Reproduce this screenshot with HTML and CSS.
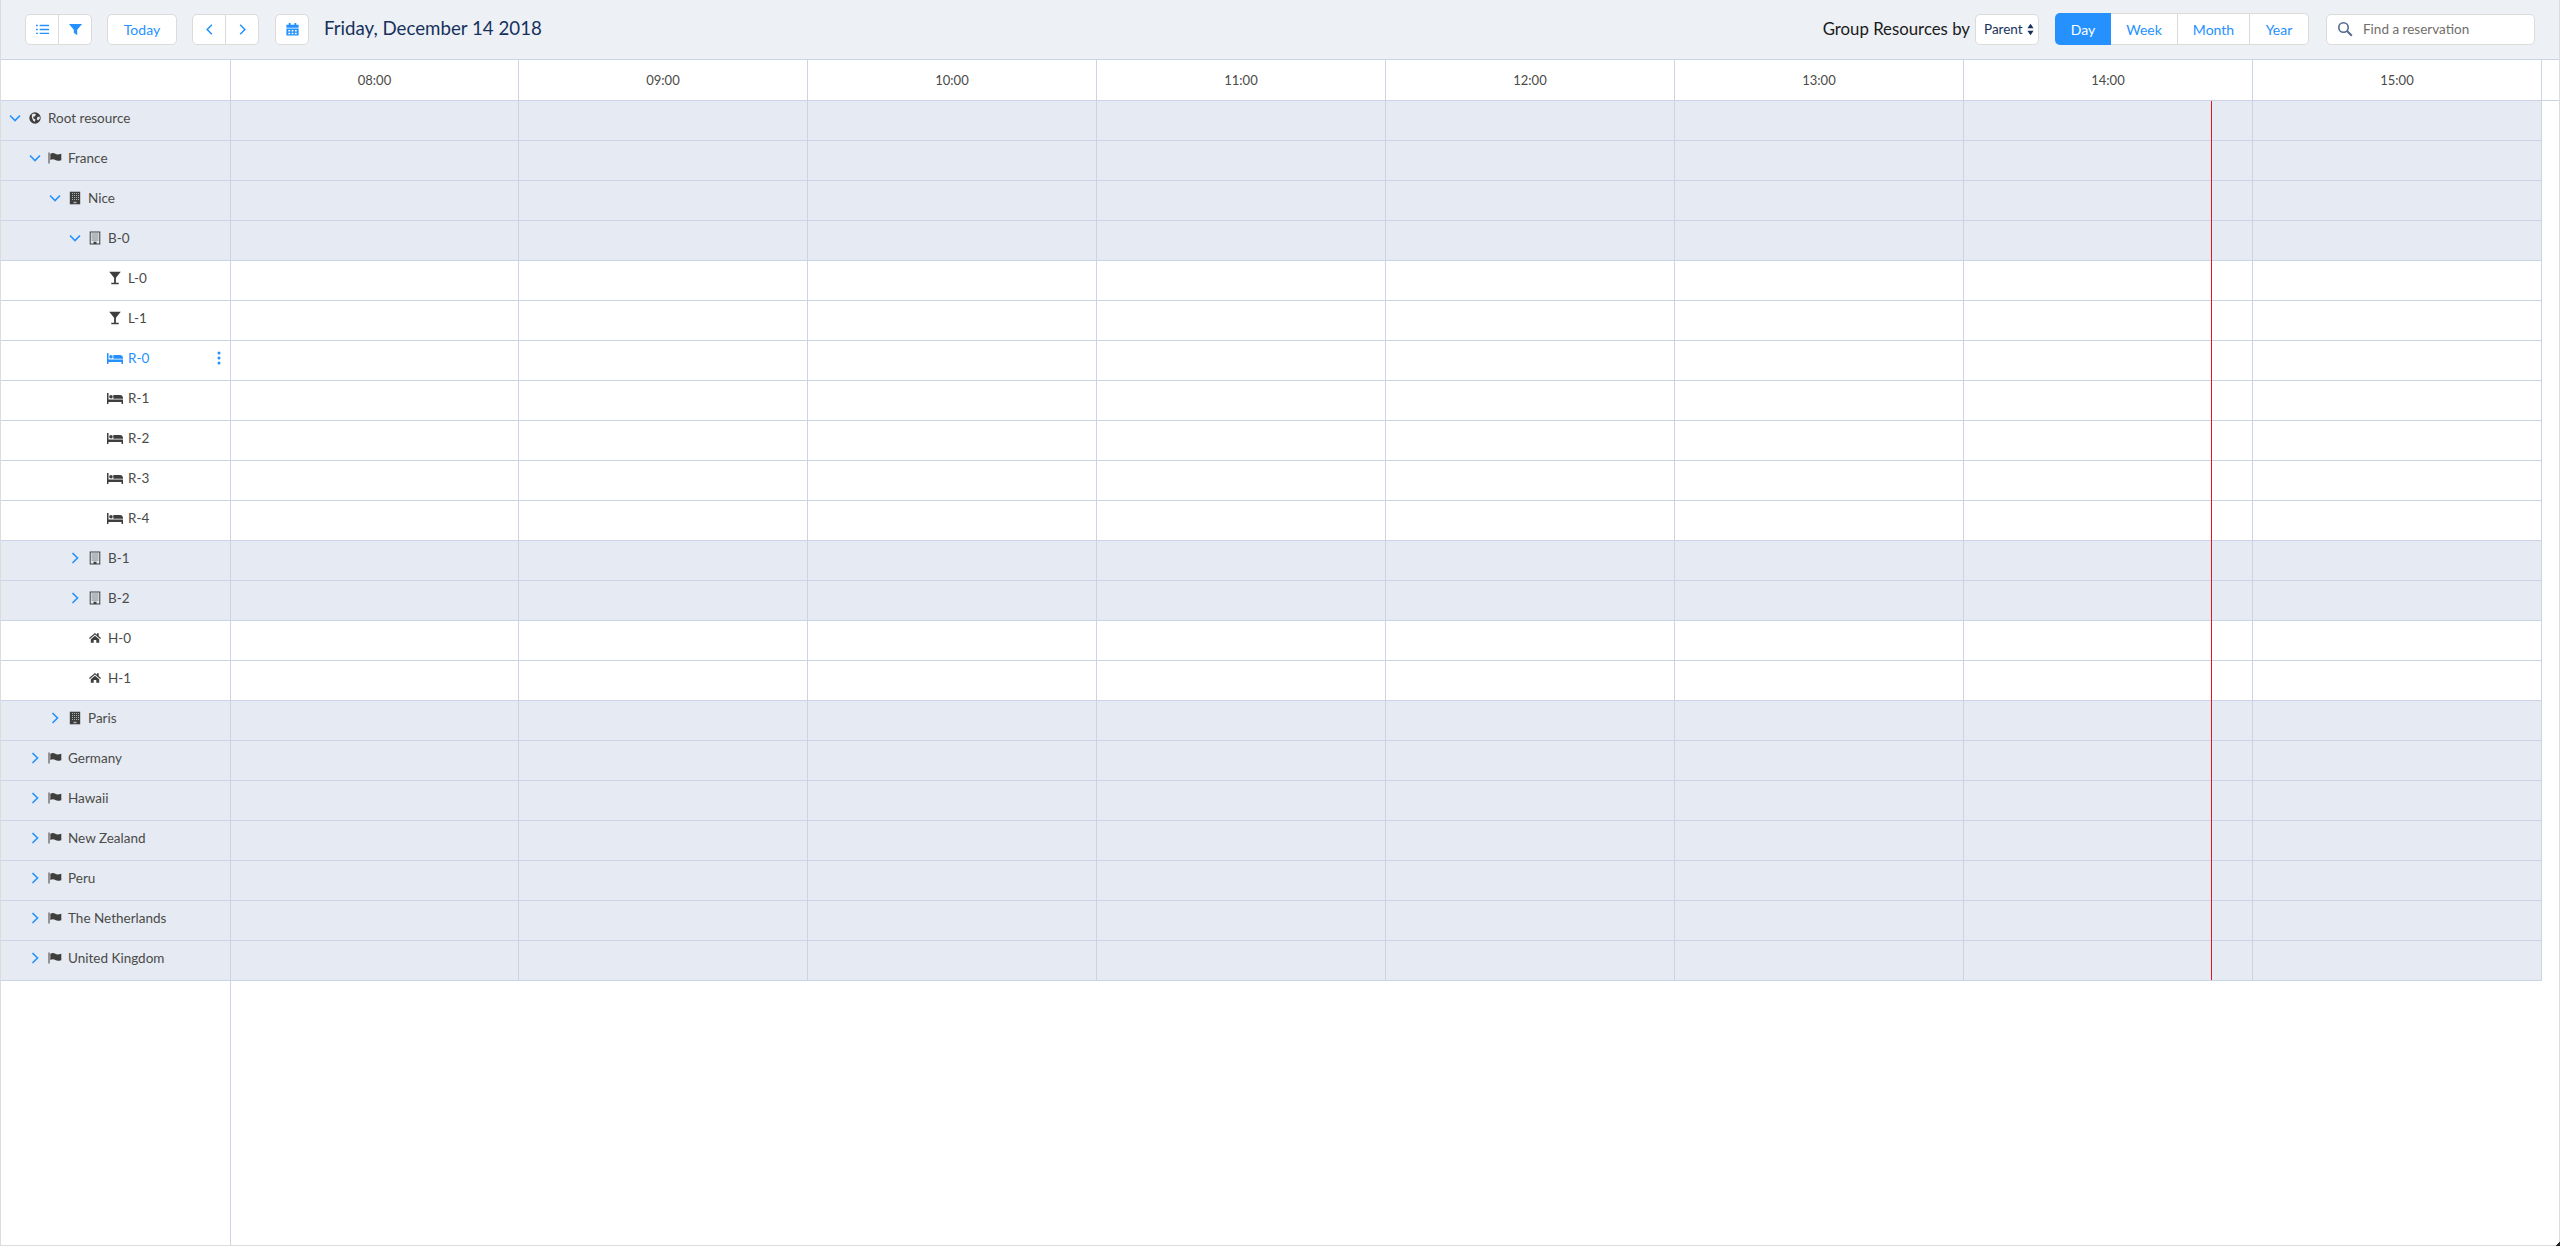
FILE: index.html
```html
<!DOCTYPE html>
<html lang="en">
<head>
<meta charset="utf-8">
<title>Scheduler</title>
<link rel="stylesheet" href="styles.css">
</head>
<body>
<svg class="defs" width="0" height="0" aria-hidden="true">
  <symbol id="i-globe" viewBox="0 0 16 16"><circle cx="8" cy="8" r="5.700" fill="currentColor"/><path d="M4.800 4.600 7 3.400l2 1-1 1.800-1.800.5.400 1.800 1.900 1-.7 2.200-1.600-1L4.900 7.500zM10.400 7l2.200-.4.300 1.800-1.800 2.200-1.300-1.300z" fill="#e6eaf2"/></symbol>
  <symbol id="i-flag" viewBox="0 0 16 16"><path d="M1.500 2.500h1v11h-1z" fill="currentColor"/><path d="M3.300 3.800c2-1.100 3.500-1.100 5 0 1.500.8 3 .8 6 0v6.400c-3 .8-4.500.8-6-.2-1.500-1-3-1-5 0z" fill="currentColor"/></symbol>
  <symbol id="i-city" viewBox="0 0 16 16"><path d="M2.800 1.700h10.400v12.600H2.800z" fill="currentColor"/><path d="M5 3h1v1H5zm2 0h1v1H7zm2 0h1v1H9zm2 0h1v1h-1zM5 5h1v1H5zm2 0h1v1H7zm2 0h1v1H9zm2 0h1v1h-1zM5 7h1v1H5zm2 0h1v1H7zm2 0h1v1H9zm2 0h1v1h-1zM5 9h1v1H5zm2 0h1v1H7zm2 0h1v1H9zm2 0h1v1h-1zM6.500 11.700h3v1.600h-3z" fill="#a8aeb6"/></symbol>
  <symbol id="i-building" viewBox="0 0 16 16"><path d="M2.700 1.500h10.600v13H2.700zm1 1v11h2.800v-1.800h3v1.800h2.800v-11z" fill="currentColor"/><path d="M4.700 3.300h6.600v7.600H4.700z" fill="#9298a0"/><path d="M6 3.300v7.600M8 3.300v7.600M10 3.300v7.600M4.700 5h6.600M4.700 7h6.600M4.700 9h6.600" stroke="#dfe3ea" stroke-width=".5"/></symbol>
  <symbol id="i-glass" viewBox="0 0 16 16"><path d="M2.200 1.800h11.600L8.900 7.800v5h2.800v1.400H4.300v-1.400h2.800v-5z" fill="currentColor"/></symbol>
  <symbol id="i-bed" viewBox="1 1 16 14"><path d="M1 3h1.500v6.500H17V14h-1.500v-2h-13v2H1z" fill="currentColor"/><circle cx="5" cy="6.800" r="1.800" fill="currentColor"/><path d="M7.300 5h6.700c1.600 0 3 1 3 3v.8H7.300z" fill="currentColor"/></symbol>
  <symbol id="i-home" viewBox="0 0 16 16"><path d="M8 3 2 8.100l.8.900L8 4.600 13.200 9l.8-.9-2.300-2V3.300H10v1.400z" fill="currentColor"/><path d="M3.800 9.300 8 5.700l4.200 3.600v3.500H9.300V10H6.700v2.800H3.800z" fill="currentColor"/></symbol>
  <symbol id="i-down" viewBox="0 0 16 16"><path d="M3 5.500 8 10.500 13 5.500" fill="none" stroke="currentColor" stroke-width="1.600"/></symbol>
  <symbol id="i-right" viewBox="0 0 16 16"><path d="M5.500 3 10.500 8 5.500 13" fill="none" stroke="currentColor" stroke-width="1.600"/></symbol>
  <symbol id="i-left" viewBox="0 0 16 16"><path d="M10.500 3 5.500 8 10.500 13" fill="none" stroke="currentColor" stroke-width="1.600"/></symbol>
</svg>

<div class="frame">
  <header class="toolbar">
    <div class="btn-group">
      <button class="btn icon-btn" aria-label="List">
        <svg class="ico-btn" viewBox="0 0 16 16"><path d="M1 3h2v1.500H1zm4 0h10v1.500H5zM1 7.200h2v1.500H1zm4 0h10v1.500H5zM1 11.400h2v1.500H1zm4 0h10v1.500H5z" fill="currentColor"/></svg>
      </button>
      <button class="btn icon-btn" aria-label="Filter">
        <svg class="ico-btn" viewBox="0 0 16 16"><path d="M1 2h14L9.800 8.200V14L6.200 11.500V8.200z" fill="currentColor"/></svg>
      </button>
    </div>
    <button class="btn today">Today</button>
    <div class="btn-group">
      <button class="btn icon-btn" aria-label="Previous"><svg class="ico-btn"><use href="#i-left"/></svg></button>
      <button class="btn icon-btn" aria-label="Next"><svg class="ico-btn"><use href="#i-right"/></svg></button>
    </div>
    <button class="btn icon-btn single" aria-label="Pick date">
      <svg class="ico-btn" viewBox="0 0 16 16"><path d="M4 1h2v2h4V1h2v2h2.500v3h-13V3H4z" fill="currentColor"/><path d="M1.500 7h13v7.500h-13zM3.500 8.500v1.500h2V8.500zm3.500 0v1.500h2V8.500zm3.500 0v1.500h2V8.500zm-7 3v1.500h2v-1.500zm3.500 0v1.500h2v-1.500zm3.500 0v1.500h2v-1.500z" fill="currentColor" fill-rule="evenodd"/></svg>
    </button>
    <h1 class="title">Friday, December 14 2018</h1>
    <span class="group-label">Group Resources by</span>
    <div class="select">
      <span>Parent</span>
      <svg class="updown" viewBox="0 0 8 14"><path d="M4 .5 7.500 5.500H.5zM4 13.500.5 8.500h7z" fill="currentColor"/></svg>
    </div>
    <div class="seg">
      <button class="seg-btn day active">Day</button>
      <button class="seg-btn week">Week</button>
      <button class="seg-btn month">Month</button>
      <button class="seg-btn year">Year</button>
    </div>
    <div class="search">
      <svg class="search-ico" viewBox="0 0 16 16"><circle cx="6.500" cy="6.500" r="4.700" fill="none" stroke="currentColor" stroke-width="1.600"/><path d="m10 10 4.800 4.800" stroke="currentColor" stroke-width="2"/></svg>
      <span>Find a reservation</span>
    </div>
  </header>

  <div class="timeline-head">
    <div class="corner"></div>
    <div class="hour">08:00</div>
    <div class="hour">09:00</div>
    <div class="hour">10:00</div>
    <div class="hour">11:00</div>
    <div class="hour">12:00</div>
    <div class="hour">13:00</div>
    <div class="hour">14:00</div>
    <div class="hour">15:00</div>
  </div>

  <main class="board">
    <div class="row parent l0"><svg class="chev"><use href="#i-down"/></svg><svg class="ico"><use href="#i-globe"/></svg><span>Root resource</span></div>
    <div class="row parent l1"><svg class="chev"><use href="#i-down"/></svg><svg class="ico"><use href="#i-flag"/></svg><span>France</span></div>
    <div class="row parent l2"><svg class="chev"><use href="#i-down"/></svg><svg class="ico"><use href="#i-city"/></svg><span>Nice</span></div>
    <div class="row parent l3"><svg class="chev"><use href="#i-down"/></svg><svg class="ico"><use href="#i-building"/></svg><span>B-0</span></div>
    <div class="row l4"><i class="chev"></i><svg class="ico"><use href="#i-glass"/></svg><span>L-0</span></div>
    <div class="row l4"><i class="chev"></i><svg class="ico"><use href="#i-glass"/></svg><span>L-1</span></div>
    <div class="row l4 selected"><i class="chev"></i><svg class="ico"><use href="#i-bed"/></svg><span>R-0</span>
      <svg class="kebab" viewBox="0 0 4 14"><circle cx="2" cy="2" r="1.500"/><circle cx="2" cy="7" r="1.500"/><circle cx="2" cy="12" r="1.500"/></svg></div>
    <div class="row l4"><i class="chev"></i><svg class="ico"><use href="#i-bed"/></svg><span>R-1</span></div>
    <div class="row l4"><i class="chev"></i><svg class="ico"><use href="#i-bed"/></svg><span>R-2</span></div>
    <div class="row l4"><i class="chev"></i><svg class="ico"><use href="#i-bed"/></svg><span>R-3</span></div>
    <div class="row l4"><i class="chev"></i><svg class="ico"><use href="#i-bed"/></svg><span>R-4</span></div>
    <div class="row parent l3"><svg class="chev"><use href="#i-right"/></svg><svg class="ico"><use href="#i-building"/></svg><span>B-1</span></div>
    <div class="row parent l3"><svg class="chev"><use href="#i-right"/></svg><svg class="ico"><use href="#i-building"/></svg><span>B-2</span></div>
    <div class="row l3"><i class="chev"></i><svg class="ico"><use href="#i-home"/></svg><span>H-0</span></div>
    <div class="row l3"><i class="chev"></i><svg class="ico"><use href="#i-home"/></svg><span>H-1</span></div>
    <div class="row parent l2"><svg class="chev"><use href="#i-right"/></svg><svg class="ico"><use href="#i-city"/></svg><span>Paris</span></div>
    <div class="row parent l1"><svg class="chev"><use href="#i-right"/></svg><svg class="ico"><use href="#i-flag"/></svg><span>Germany</span></div>
    <div class="row parent l1"><svg class="chev"><use href="#i-right"/></svg><svg class="ico"><use href="#i-flag"/></svg><span>Hawaii</span></div>
    <div class="row parent l1"><svg class="chev"><use href="#i-right"/></svg><svg class="ico"><use href="#i-flag"/></svg><span>New Zealand</span></div>
    <div class="row parent l1"><svg class="chev"><use href="#i-right"/></svg><svg class="ico"><use href="#i-flag"/></svg><span>Peru</span></div>
    <div class="row parent l1"><svg class="chev"><use href="#i-right"/></svg><svg class="ico"><use href="#i-flag"/></svg><span>The Netherlands</span></div>
    <div class="row parent l1"><svg class="chev"><use href="#i-right"/></svg><svg class="ico"><use href="#i-flag"/></svg><span>United Kingdom</span></div>

    <div class="grid-lines">
      <div></div><div></div><div></div><div></div><div></div><div></div><div></div><div></div>
      <div class="now-line"></div>
    </div>
    <div class="side-line"></div>
  </main>
</div>
</body>
</html>
```
FILE: styles.css
```css
* { box-sizing: border-box; }
html, body { margin: 0; padding: 0; height: 100%; }
body {
  font-family: "Lato", "Open Sans", sans-serif;
  color: #3e3e3c;
  background: #fff;
  overflow: hidden;
}
.defs { position: absolute; }
.frame {
  position: relative;
  width: 2560px;
  height: 1246px;
  border-left: 1px solid #dcdcdc;
  border-right: 1px solid #dcdcdc;
  border-bottom: 1px solid #dcdcdc;
  display: flex;
  flex-direction: column;
}
.frame::after {
  content: "";
  position: absolute;
  right: -1px;
  bottom: -1px;
  width: 4px;
  height: 4px;
  background: linear-gradient(135deg, transparent 50%, #222 50%);
}

/* Toolbar */
.toolbar {
  height: 60px;
  flex: none;
  background: #edf0f5;
  border-bottom: 1px solid #cbd4e4;
  display: flex;
  align-items: center;
  padding: 0 24px 1px 24px;
}
.btn-group { display: flex; }
.btn {
  font: inherit;
  color: #2491ff;
  background: #fff;
  border: 1px solid #dddbda;
  padding: 0;
  display: flex;
  align-items: center;
  justify-content: center;
  height: 31px;
}
.icon-btn { width: 34px; }
.btn-group .btn:first-child { border-radius: 5px 0 0 5px; }
.btn-group .btn:last-child { border-radius: 0 5px 5px 0; margin-left: -1px; }
.btn-group + .today { margin-left: 15px; }
.today { width: 70px; border-radius: 5px; font-size: 14px; margin-right: 15px; }
.single { border-radius: 5px; margin-left: 16px; }
.ico-btn { width: 15px; height: 15px; }
.title {
  margin: 0 0 3px 15px;
  font-size: 18.700px;
  font-weight: 400;
  color: #16325c;
  line-height: 28px;
  flex: 1;
}
.group-label { font-size: 16.800px; color: #1a1a1a; margin-right: 5px; margin-bottom: 2px; }
.select {
  width: 64px;
  height: 31px;
  background: #fff;
  border: 1px solid #dddbda;
  border-radius: 5px;
  display: flex;
  align-items: center;
  padding-left: 8px;
  gap: 4px;
  font-size: 13.500px;
  color: #16325c;
  margin-right: 16px;
}
.updown { width: 7px; height: 13px; }
.seg { display: flex; height: 32px; margin-right: 17px; }
.seg-btn {
  font: inherit;
  font-size: 14px;
  color: #2491ff;
  background: #fff;
  border: 1px solid #dddbda;
  border-left: none;
  padding: 0;
}
.seg-btn.day { width: 56px; border: none; border-radius: 5px 0 0 5px; }
.seg-btn.week { width: 67px; }
.seg-btn.month { width: 72px; }
.seg-btn.year { width: 59px; border-radius: 0 5px 5px 0; }
.seg-btn.active { background: #2491ff; color: #fff; }
.search {
  width: 209px;
  height: 31px;
  background: #fff;
  border: 1px solid #dddbda;
  border-radius: 5px;
  display: flex;
  align-items: center;
  padding-left: 10px;
  gap: 10px;
  font-size: 13.500px;
  color: #706e6b;
}
.search-ico { width: 16px; height: 16px; color: #54698d; }

/* Time header */
.timeline-head {
  display: flex;
  height: 41px;
  flex: none;
  border-bottom: 1px solid #cbd4e4;
  padding-right: 17px;
}
.corner { width: 230px; flex: none; border-right: 1px solid #cbd4e4; }
.hour {
  flex: none;
  width: 289px;
  border-right: 1px solid #cbd4e4;
  display: flex;
  align-items: center;
  justify-content: center;
  font-size: 13px;
  color: #4a4a48;
}
.corner + .hour { width: 288px; }

/* Board */
.board { position: relative; flex: 1; }
.row {
  height: 40px;
  margin-right: 17px;
  border-bottom: 1px solid #cbd4e4;
  display: flex;
  align-items: center;
  font-size: 13.500px;
  color: #4a4a48;
  background: #fff;
  padding-bottom: 5px;
}
.row.parent { background: #e6eaf2; }
.row.selected { color: #2491ff; }
.l0 { padding-left: 6px; }
.l1 { padding-left: 26px; }
.l2 { padding-left: 46px; }
.l3 { padding-left: 66px; }
.l4 { padding-left: 86px; }
.chev { width: 16px; height: 16px; color: #2491ff; flex: none; display: block; }
.ico { width: 16px; height: 16px; margin: 0 5px 0 4px; flex: none; color: #3e3e3c; }
.selected .ico { color: #2491ff; }
.kebab { width: 4px; height: 14px; fill: #2491ff; position: absolute; left: 216px; }

.grid-lines {
  position: absolute;
  left: 230px;
  top: 0;
  bottom: 265px;
  width: 2311px;
  display: flex;
}
.grid-lines > div { flex: none; width: 289px; border-right: 1px solid #cbd4e4; }
.grid-lines > div:first-child { width: 288px; }
.grid-lines > .now-line {
  position: absolute;
  left: 1980px;
  top: 0;
  bottom: 0;
  width: 1px;
  border: none;
  background: #e8131f;
}
.side-line {
  position: absolute;
  left: 229px;
  top: 0;
  bottom: 0;
  width: 1px;
  background: #cbd4e4;
}
```
